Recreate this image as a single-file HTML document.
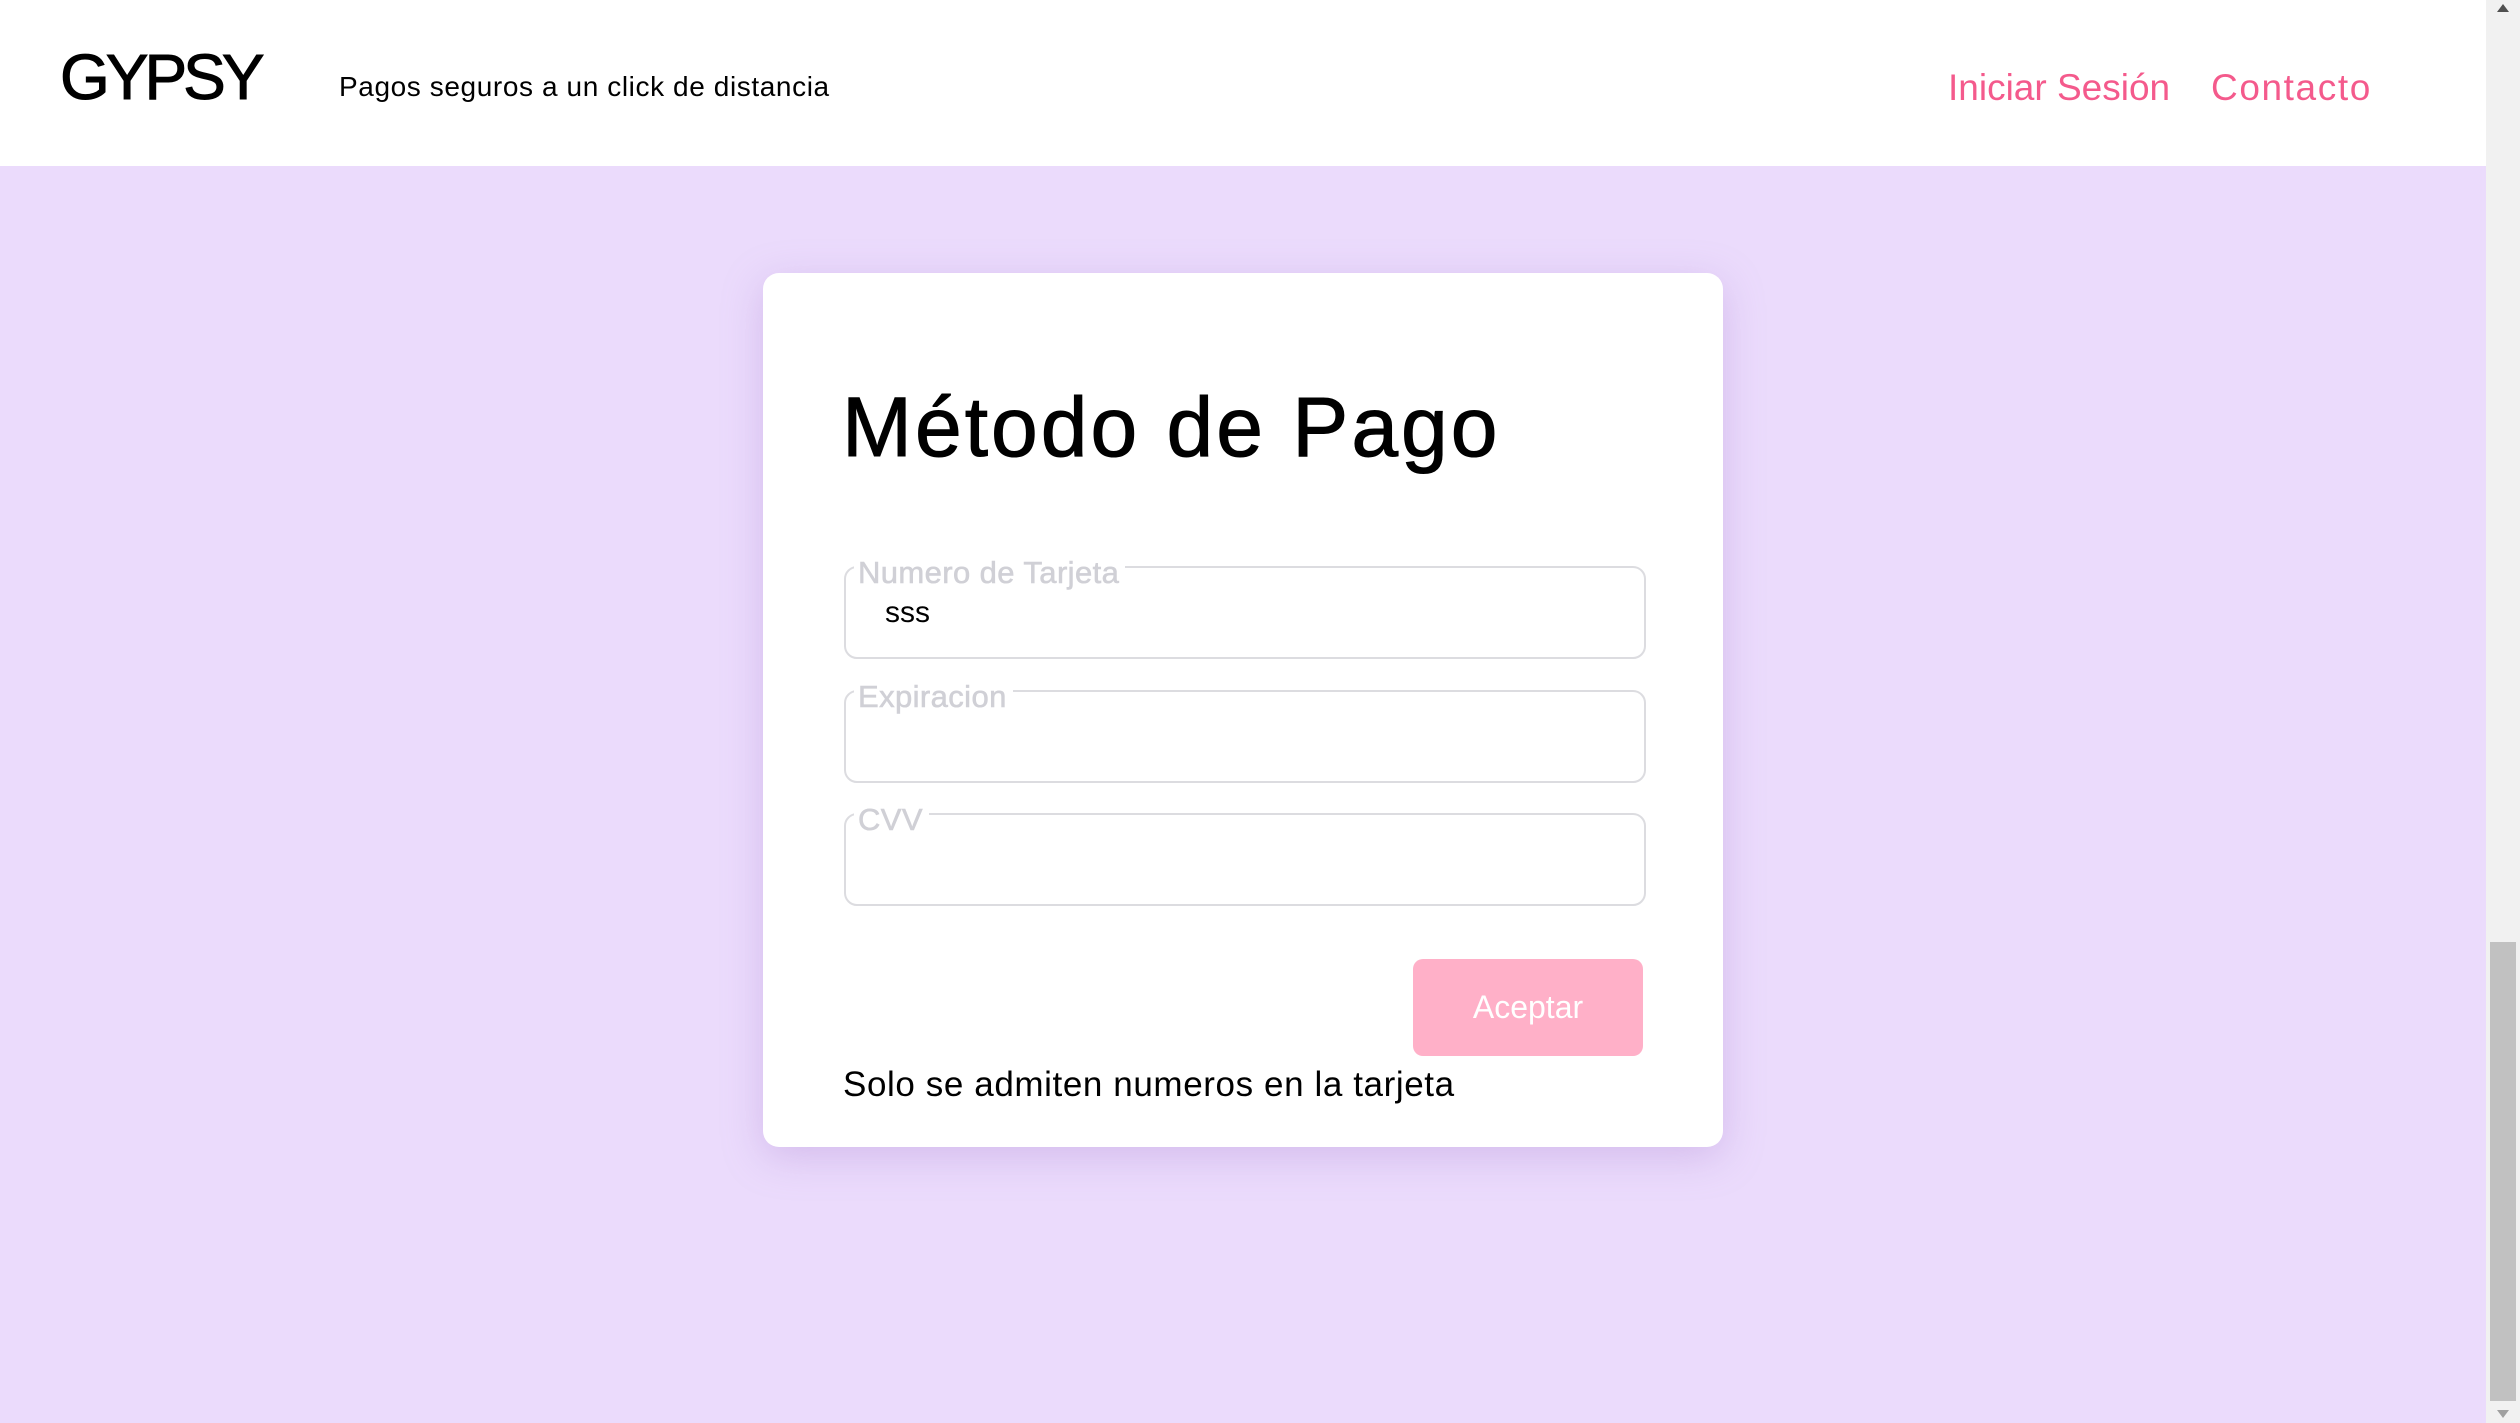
<!DOCTYPE html>
<html><head><meta charset="utf-8"><style>
*{margin:0;padding:0;box-sizing:border-box}
html,body{width:2520px;height:1423px;overflow:hidden;background:#ebdbfc;font-family:"Liberation Sans",sans-serif;position:relative}
.hdr{position:absolute;left:0;top:0;width:2486px;height:166px;background:#fff}
.abs{position:absolute;white-space:nowrap}
.card{position:absolute;left:763px;top:273px;width:960px;height:874px;background:#fff;border-radius:16px;box-shadow:0 10px 40px rgba(170,130,210,.35)}
.f{position:absolute;left:844px;width:802px;height:93px;border:2.5px solid #dcdce0;border-radius:13px}
.lab{position:absolute;left:8px;top:-13px;background:#fff;padding:0 6px 0 4px;color:#d0d0d6;font-size:31px;line-height:36px;letter-spacing:0.4px;-webkit-text-stroke:0.6px #d0d0d6}
.sb{position:absolute;left:2486px;top:0;width:34px;height:1423px;background:#f1f1f1}
</style></head><body>
<div class="hdr"></div>
<div class="abs" style="left:60px;top:40px;font-size:64px;line-height:74px;color:#000;letter-spacing:-4px;-webkit-text-stroke:1px #000">GYPSY</div>
<div class="abs" style="left:339px;top:70px;font-size:28px;line-height:34px;color:#000;letter-spacing:0.6px">Pagos seguros a un click de distancia</div>
<div class="abs" style="left:1948px;top:66px;font-size:37px;line-height:44px;color:#f45a8c;letter-spacing:0px">Iniciar Sesión</div>
<div class="abs" style="left:2211px;top:66px;font-size:37px;line-height:44px;color:#f45a8c;letter-spacing:1.6px">Contacto</div>
<div class="card"></div>
<div class="abs" style="left:842px;top:377px;font-size:84px;line-height:100px;color:#000;letter-spacing:3px;-webkit-text-stroke:1px #000">Método de Pago</div>
<div class="f" style="top:566px"><div class="lab">Numero de Tarjeta</div><div class="abs" style="left:39px;top:28px;font-size:30px;color:#000">sss</div></div>
<div class="f" style="top:690px"><div class="lab">Expiracion</div></div>
<div class="f" style="top:813px"><div class="lab">CVV</div></div>
<div class="abs" style="left:1413px;top:959px;width:230px;height:97px;background:#ffb0c8;border-radius:10px;color:#fff;font-size:32px;line-height:97px;text-align:center">Aceptar</div>
<div class="abs" style="left:843px;top:1064px;font-size:35px;line-height:42px;color:#000;letter-spacing:0.6px">Solo se admiten numeros en la tarjeta</div>
<div class="sb">
<div style="position:absolute;left:4px;top:942px;width:26px;height:459px;background:#c1c1c1"></div>
<div style="position:absolute;left:11px;top:4px;width:0;height:0;border-left:6px solid transparent;border-right:6px solid transparent;border-bottom:8px solid #505050"></div>
<div style="position:absolute;left:11px;top:1410px;width:0;height:0;border-left:6px solid transparent;border-right:6px solid transparent;border-top:8px solid #a0a0a0"></div>
</div>
</body></html>
